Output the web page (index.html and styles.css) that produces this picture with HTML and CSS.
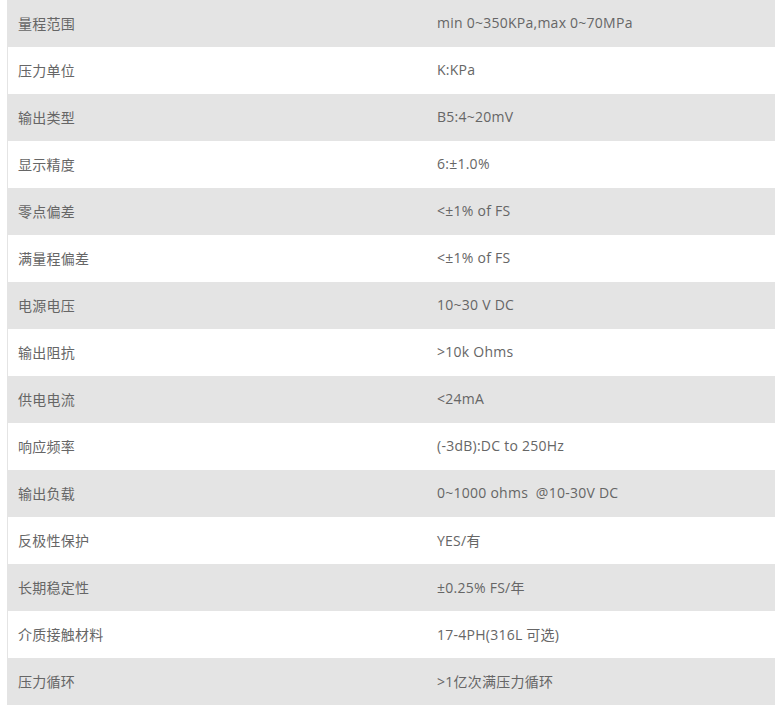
FILE: index.html
```html
<!DOCTYPE html>
<html>
<head>
<meta charset="utf-8">
<link rel="stylesheet" href="styles.css">
</head>
<body>
<div class="spec">
  <div class="row"><div class="k">量程范围</div><div class="v">min 0~350KPa,max 0~70MPa</div></div>
  <div class="row"><div class="k">压力单位</div><div class="v">K:KPa</div></div>
  <div class="row"><div class="k">输出类型</div><div class="v">B5:4~20mV</div></div>
  <div class="row"><div class="k">显示精度</div><div class="v">6:±1.0%</div></div>
  <div class="row"><div class="k">零点偏差</div><div class="v">&lt;±1% of FS</div></div>
  <div class="row"><div class="k">满量程偏差</div><div class="v">&lt;±1% of FS</div></div>
  <div class="row"><div class="k">电源电压</div><div class="v">10~30 V DC</div></div>
  <div class="row"><div class="k">输出阻抗</div><div class="v">&gt;10k Ohms</div></div>
  <div class="row"><div class="k">供电电流</div><div class="v">&lt;24mA</div></div>
  <div class="row"><div class="k">响应频率</div><div class="v">(-3dB):DC to 250Hz</div></div>
  <div class="row"><div class="k">输出负载</div><div class="v">0~1000 ohms&nbsp; @10-30V DC</div></div>
  <div class="row"><div class="k">反极性保护</div><div class="v">YES/有</div></div>
  <div class="row"><div class="k">长期稳定性</div><div class="v">±0.25% FS/年</div></div>
  <div class="row"><div class="k">介质接触材料</div><div class="v">17-4PH(316L 可选)</div></div>
  <div class="row"><div class="k">压力循环</div><div class="v">&gt;1亿次满压力循环</div></div>
</div>
</body>
</html>
```
FILE: styles.css
```css
html, body {
  margin: 0;
  padding: 0;
  background: #fff;
}
body {
  font-family: "Open Sans", "Noto Sans CJK SC", sans-serif;
  font-size: 14px;
  color: #666;
  letter-spacing: 0.25px;
}
.spec {
  margin-left: 7px;
  border-left: 1px solid #e4e4e4;
  display: flex;
  flex-direction: column;
}
.row {
  display: grid;
  grid-template-columns: 419px 1fr;
  height: 47px;
  align-items: center;
}
.row:nth-child(odd) {
  background: #e4e4e4;
}
.k,
.v {
  padding-left: 10px;
  padding-bottom: 2px;
}
```
